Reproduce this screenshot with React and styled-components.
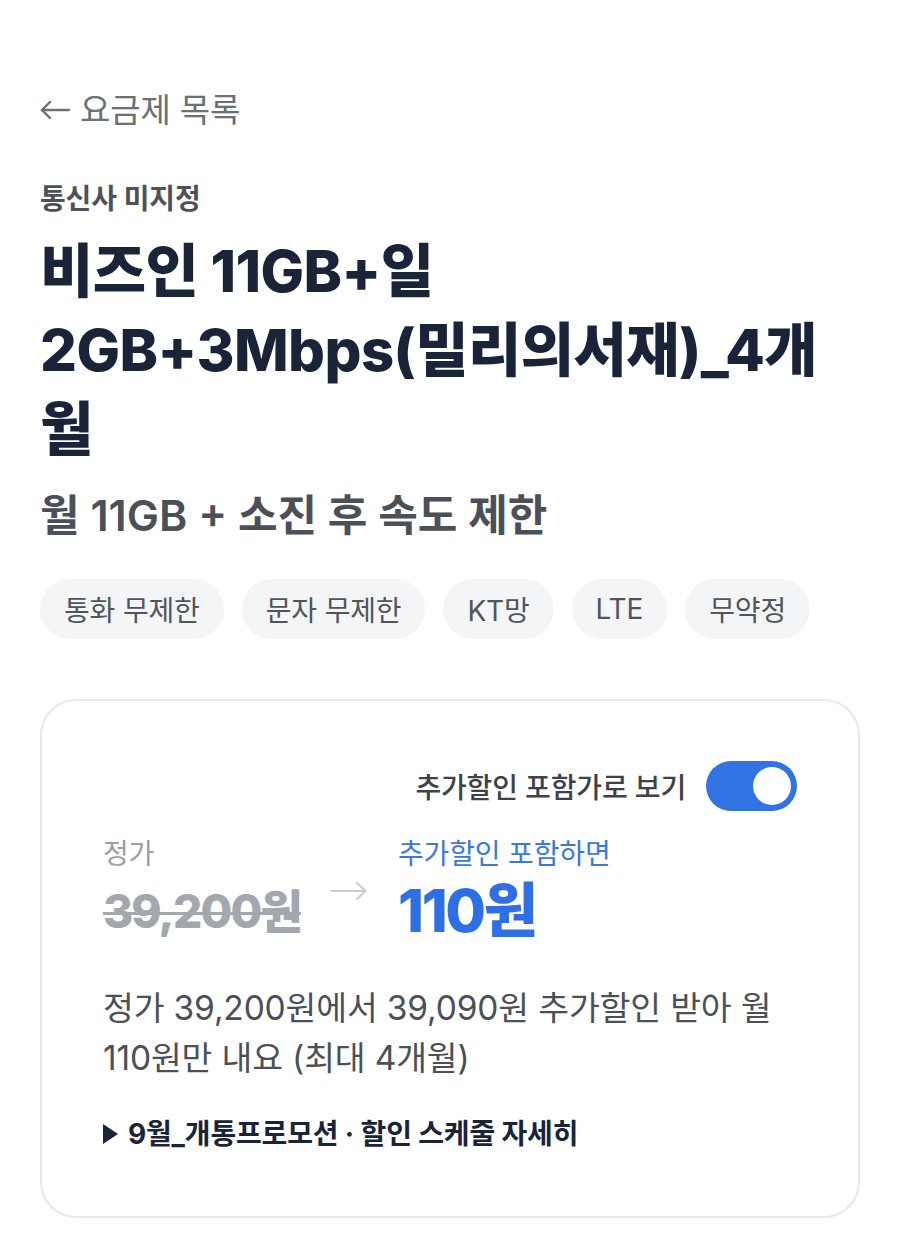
import React, { useState } from 'react';
import styled, { createGlobalStyle } from 'styled-components';

const GlobalStyle = createGlobalStyle`
  * {
    margin: 0;
    padding: 0;
    box-sizing: border-box;
  }
  body {
    background: #fff;
    font-family: Inter, "Noto Sans CJK KR", sans-serif;
    word-break: keep-all;
    overflow-wrap: anywhere;
  }
`;

const Page = styled.div`
  width: 900px;
  padding: 88px 40px 40px;
  letter-spacing: -0.01em;
`;

const BackLink = styled.a`
  display: flex;
  align-items: center;
  gap: 10px;
  font-size: 33px;
  line-height: 44px;
  color: #6b6f76;
  text-decoration: none;
`;

const Carrier = styled.div`
  margin-top: 49px;
  font-size: 28px;
  line-height: 36px;
  font-weight: 600;
  color: #4d5259;
`;

const Title = styled.h1`
  margin-top: 15px;
  max-width: 805px;
  font-size: 58px;
  line-height: 79px;
  font-weight: 800;
  color: #1a2438;
  letter-spacing: -0.01em;
`;

const Subtitle = styled.h2`
  margin-top: 20px;
  font-size: 43px;
  line-height: 52px;
  font-weight: 600;
  color: #4b5058;
  letter-spacing: 0;
`;

const Chips = styled.div`
  display: flex;
  gap: 18px;
  margin-top: 38px;
`;

const Chip = styled.span`
  display: inline-flex;
  align-items: center;
  height: 60px;
  padding: 0 24px;
  border-radius: 30px;
  background: #f4f5f7;
  font-size: 28px;
  color: #50555c;
`;

const Card = styled.section`
  margin-top: 60px;
  border: 2px solid #e6e8eb;
  border-radius: 36px;
  padding: 60px 61px 63px;
`;

const ToggleRow = styled.div`
  display: flex;
  justify-content: flex-end;
  align-items: center;
  gap: 20px;
`;

const ToggleLabel = styled.span`
  font-size: 28px;
  font-weight: 500;
  color: #3d4148;
`;

const Switch = styled.button`
  position: relative;
  width: 91px;
  height: 50px;
  border: none;
  border-radius: 25px;
  background: ${p => (p.$on ? '#3273e3' : '#d1d5db')};
  cursor: pointer;

  &::after {
    content: '';
    position: absolute;
    top: 6px;
    left: ${p => (p.$on ? '47px' : '6px')};
    width: 38px;
    height: 38px;
    border-radius: 50%;
    background: #fff;
  }
`;

const PriceRow = styled.div`
  display: flex;
  margin-top: 24px;
`;

const PriceCol = styled.div`
  display: flex;
  flex-direction: column;
  gap: 8px;
  width: ${p => p.$width || 'auto'};
  white-space: nowrap;
`;

const PriceLabel = styled.span`
  font-size: 28px;
  line-height: 38px;
  color: ${p => (p.$accent ? '#3a78de' : '#9a9ea6')};
`;

const PriceValue = styled.span`
  font-size: ${p => (p.$accent ? '59px' : '46px')};
  line-height: 60px;
  font-weight: 800;
  color: ${p => (p.$accent ? '#2f6fe6' : '#a3a7ae')};
  text-decoration: ${p => (p.$struck ? 'line-through' : 'none')};
  text-decoration-thickness: 3px;
  letter-spacing: -0.04em;
`;

const ArrowCell = styled.div`
  display: flex;
  justify-content: center;
  width: 99px;
  padding-top: 46px;
`;

const Description = styled.p`
  margin-top: 42px;
  font-size: 33.5px;
  line-height: 50px;
  color: #4b5058;
`;

const DetailLink = styled.a`
  display: flex;
  align-items: center;
  gap: 10px;
  margin-top: 32px;
  font-size: 28px;
  line-height: 38px;
  font-weight: 700;
  color: #1a2438;
  text-decoration: none;
`;

const LongArrow = ({ width, color, stroke }) => (
  <svg width={width} height="20" viewBox={`0 0 ${width} 20`} fill="none"
    stroke={color} strokeWidth={stroke} strokeLinecap="round" strokeLinejoin="round">
    <path d={`M1.5 10H${width - 1.5}`} />
    <path d={`M${width - 10} 2L${width - 1.5} 10L${width - 10} 18`} />
  </svg>
);

const BackArrow = () => (
  <svg width="30" height="20" viewBox="0 0 30 20" fill="none"
    stroke="#6b6f76" strokeWidth="2.4" strokeLinecap="round" strokeLinejoin="round">
    <path d="M2 10H29" />
    <path d="M10 2L2 10L10 18" />
  </svg>
);

const Triangle = () => (
  <svg width="15" height="20" viewBox="0 0 15 20">
    <path d="M0 0L15 10L0 20Z" fill="#1a2438" />
  </svg>
);

const tags = ['통화 무제한', '문자 무제한', 'KT망', 'LTE', '무약정'];

export default function App() {
  const [withDiscount, setWithDiscount] = useState(true);

  return (
    <>
      <GlobalStyle />
      <Page>
        <BackLink href="#"><BackArrow />요금제 목록</BackLink>
        <Carrier>통신사 미지정</Carrier>
        <Title>비즈인 11GB+일 2GB+3Mbps(밀리의서재)_4개월</Title>
        <Subtitle>월 11GB + 소진 후 속도 제한</Subtitle>
        <Chips>
          {tags.map(t => (
            <Chip key={t}>{t}</Chip>
          ))}
        </Chips>

        <Card>
          <ToggleRow>
            <ToggleLabel>추가할인 포함가로 보기</ToggleLabel>
            <Switch $on={withDiscount} onClick={() => setWithDiscount(!withDiscount)} />
          </ToggleRow>
          <PriceRow>
            <PriceCol $width="196px">
              <PriceLabel>정가</PriceLabel>
              <PriceValue $struck>39,200원</PriceValue>
            </PriceCol>
            <ArrowCell>
              <LongArrow width={37} color="#c9ccd1" stroke={2} />
            </ArrowCell>
            <PriceCol>
              <PriceLabel $accent>추가할인 포함하면</PriceLabel>
              <PriceValue $accent>110원</PriceValue>
            </PriceCol>
          </PriceRow>
          <Description>
            정가 39,200원에서 39,090원 추가할인 받아 월 110원만 내요 (최대 4개월)
          </Description>
          <DetailLink href="#"><Triangle />9월_개통프로모션 · 할인 스케줄 자세히</DetailLink>
        </Card>
      </Page>
    </>
  );
}
